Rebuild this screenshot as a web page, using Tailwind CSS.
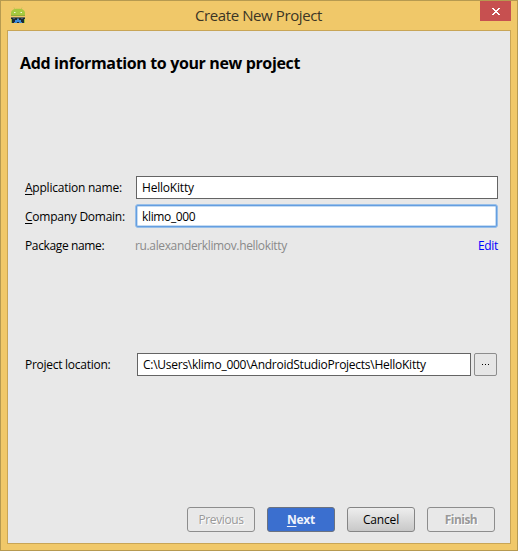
<!DOCTYPE html>
<html lang="en"><head><meta charset="utf-8"><title>Create New Project</title>
<script src="https://cdn.jsdelivr.net/npm/@tailwindcss/browser@4"></script></head>
<body class="w-[518px] h-[551px] overflow-hidden">
<div class="w-[518px] h-[551px] border border-[#b69a50] bg-[#f0c869] px-[6px] pb-[6px] flex flex-col font-['Open_Sans','Noto_Sans',sans-serif] text-[12px] leading-4 text-black whitespace-nowrap">
  <header class="h-[29px] shrink-0 flex items-start">
    <svg class="w-4 h-[17px] shrink-0 mt-[6px] ml-[3px]" viewBox="0 0 16 17" fill="none">
      <path d="M4 .5 5.500 3M12 .5 10.500 3" stroke="#c9c05a"/>
      <path d="M1 8.500V6C1.300 3.200 3.500 1.800 8 1.800S14.700 3.200 15 6v2.500z" fill="#a6c93f"/>
      <path d="M1 8h14v1H1z" fill="#93ac3c"/>
      <path d="M4 5h1.500v1H4zM10.500 5H12v1h-1.500z" fill="#f4f8dc"/>
      <path d="M1 11h14v5H1z" fill="#1d2a35"/>
      <path d="M1 10h14v1H1z" fill="#6b6f58"/>
      <path d="M1 12h1v4H1zM14 12h1v4h-1z" fill="#9bc03a"/>
      <path d="M3 11h2v1H3zM11 11h2v1h-2zM7 11h2v1H7z" fill="#45596d"/>
      <path d="M4 15h1v-2h2v-1h2v1h2v2h1v1H9v-1H7v1H4z" fill="#3d8bd8"/>
    </svg>
    <h1 class="ml-[169px] mt-[4px] text-[15px] leading-5 w-[127px] text-[#3b3525] tracking-[-0.4px]">Create New Project</h1>
    <div class="ml-[158px] w-[31px] h-5 shrink-0 bg-[#c75050] flex items-center justify-center">
      <svg class="w-2 h-[7px] ml-px mt-px" viewBox="0 0 8 7" shape-rendering="crispEdges" fill="#fff"><path d="M0 0h2v1H0zM6 0h2v1H6zM1 1h2v1H1zM5 1h2v1H5zM2 2h4v1H2zM3 3h2v1H3zM2 4h4v1H2zM1 5h2v1H1zM5 5h2v1H5zM0 6h2v1H0zM6 6h2v1H6z"/></svg>
    </div>
  </header>
  <main class="h-[514px] border border-[#c8a556] bg-[#e8e8e8] flex flex-col">
    <h2 class="mt-[20px] ml-3 h-6 text-[16px] leading-6 font-bold"><span class="tracking-[-0.36px]">Add information to your new project</span></h2>
    <div class="mt-[101px] pl-[17px] h-[23px] flex items-center">
      <div class="w-[111px]"><span class="tracking-[-0.23px]"><u class="underline-offset-2">A</u>pplication name:</span></div>
      <div class="w-[362px] h-[23px] border border-[#646464] bg-white pl-[5px] leading-[21px]"><span class="tracking-[-0.2px]">HelloKitty</span></div>
    </div>
    <div class="mt-[5px] pl-[17px] h-6 flex items-center">
      <div class="w-[110px] pt-px"><span class="tracking-[-0.25px]"><u class="underline-offset-2">C</u>ompany Domain:</span></div>
      <div class="w-[363px] h-6 rounded-[3px] border border-[#97bfe9] bg-[#659ee0] p-px"><div class="h-5 rounded-[1px] border border-[#c5dcf3] bg-white pl-1 leading-5"><span class="tracking-[-0.35px]">klimo_000</span></div></div>
    </div>
    <div class="mt-[9px] pl-[17px] pr-3 h-[18px] flex items-center">
      <div class="w-[110px]"><span class="tracking-[-0.37px]">Package name:</span></div>
      <div class="grow text-[#8a8a8a]"><span class="tracking-[-0.36px]">ru.alexanderklimov.hellokitty</span></div>
      <a class="text-[#0000ff]"><span class="tracking-[-0.3px]">Edit</span></a>
    </div>
    <div class="mt-[98px] pl-[17px] h-[23px] flex items-center">
      <div class="w-[112px]"><span class="tracking-[-0.27px]">Project location:</span></div>
      <div class="w-[334px] h-[23px] border border-[#646464] bg-white pl-[5px] leading-[21px]"><span class="tracking-[-0.26px]">C:\Users\klimo_000\AndroidStudioProjects\HelloKitty</span></div>
      <button class="ml-[3px] w-[23px] h-[23px] border border-[#8d8d8d] rounded-[2px] bg-[#e6e6e6] flex items-center justify-center gap-[2px]"><i class="size-px bg-black"></i><i class="size-px bg-black"></i><i class="size-px bg-black"></i></button>
    </div>
    <div class="mt-[131px] ml-[179px] flex gap-3">
      <button class="w-[68px] h-[25px] border border-[#8d8d8d] rounded-[3px] text-[#999]"><span class="tracking-[-0.4px] [text-shadow:1px_1px_0_#fff]">Previous</span></button>
      <button class="w-[68px] h-[25px] border border-[#6b7280] rounded-[3px] bg-[#3b6fcf] font-bold text-[#f0f4fc]"><span class="tracking-[-0.2px]"><u class="underline-offset-2">N</u>ext</span></button>
      <button class="w-[68px] h-[25px] border border-[#858585] rounded-[3px] bg-linear-to-b from-[#eeeeee] to-[#c8c8c8]"><span class="tracking-[-0.15px]">Cancel</span></button>
      <button class="w-[68px] h-[25px] border border-[#8d8d8d] rounded-[3px] font-bold text-[#999]"><span class="tracking-[-0.55px] [text-shadow:1px_1px_0_#fff]">Finish</span></button>
    </div>
  </main>
</div>
</body></html>
